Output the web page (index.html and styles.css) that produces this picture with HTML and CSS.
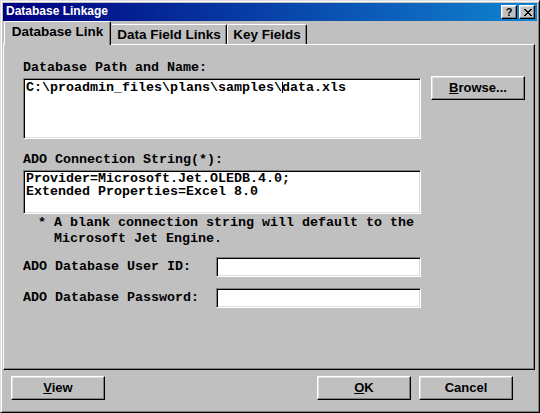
FILE: index.html
```html
<!DOCTYPE html>
<html>
<head>
<meta charset="utf-8">
<title>Database Linkage</title>
<link rel="stylesheet" href="styles.css">
</head>
<body>
<div class="window">
  <div class="titlebar">
    <span class="title">Database Linkage</span>
    <div class="tbtns">
      <span class="tbtn help">?</span>
      <span class="tbtn close"><svg width="8" height="7" viewBox="0 0 8 7" shape-rendering="crispEdges"><path d="M0 0h2v1H0z M6 0h2v1H6z M1 1h2v1H1z M5 1h2v1H5z M2 2h4v1H2z M3 3h2v1H3z M2 4h4v1H2z M1 5h2v1H1z M5 5h2v1H5z M0 6h2v1H0z M6 6h2v1H6z" fill="#000"/></svg></span>
    </div>
  </div>
  <div class="tabs">
    <div class="tab active t1">Database Link</div>
    <div class="tab t2">Data Field Links</div>
    <div class="tab t3">Key Fields</div>
  </div>
  <div class="panel">
    <div class="label first">Database Path and Name:</div>
    <div class="pathrow">
      <div class="field area1"><div class="line">C:\proadmin_files\plans\samples\<span class="caret"></span>data.xls</div></div>
      <div class="btn browse"><u>B</u>rowse...</div>
    </div>
    <div class="label second">ADO Connection String(*):</div>
    <textarea class="field area2" readonly>Provider=Microsoft.Jet.OLEDB.4.0;
Extended Properties=Excel 8.0</textarea>
    <div class="note">
      <div class="nline">* A blank connection string will default to the</div>
      <div class="nline cont">Microsoft Jet Engine.</div>
    </div>
    <div class="row r1"><span class="rlabel">ADO Database User ID:</span><input class="field input" type="text"></div>
    <div class="row r2"><span class="rlabel">ADO Database Password:</span><input class="field input" type="password"></div>
  </div>
  <div class="footer">
    <div class="btn"><u>V</u>iew</div>
    <div class="spacer"></div>
    <div class="btn"><u>O</u>K</div>
    <div class="btn">Cancel</div>
  </div>
</div>
</body>
</html>
```
FILE: styles.css
```css
html, body {
  margin: 0;
  padding: 0;
  background: #c0c0c0;
}
.window {
  width: 540px;
  height: 413px;
  box-sizing: border-box;
  border: 1px solid;
  border-color: #dfdfdf #000 #000 #dfdfdf;
  box-shadow: inset 1px 1px #fff, inset -1px -1px #808080;
  padding: 2px;
  background: #c0c0c0;
  display: flex;
  flex-direction: column;
}
.titlebar {
  height: 18px;
  flex: none;
  background: linear-gradient(to right, #000080, #1084d0);
  display: flex;
  align-items: flex-start;
  justify-content: space-between;
  padding-left: 3px;
}
.title {
  font: bold 12px/17px "Liberation Sans", Arial, sans-serif;
  color: #fff;
}
.tbtns {
  display: flex;
  gap: 2px;
  margin-top: 2px;
  margin-right: 2px;
}
.tbtn {
  width: 16px;
  height: 14px;
  box-sizing: border-box;
  background: #c0c0c0;
  border: 1px solid;
  border-color: #fff #000 #000 #fff;
  box-shadow: inset -1px -1px #808080, inset 1px 1px #dfdfdf;
  display: flex;
  align-items: center;
  justify-content: center;
}
.help {
  font: bold 11px/12px "Liberation Sans", Arial, sans-serif;
  color: #000;
}
.close svg { display: block; margin-left: 1px; }
.tabs {
  height: 23px;
  flex: none;
  display: flex;
  align-items: flex-end;
  padding-left: 1px;
  position: relative;
  z-index: 1;
}
.tab {
  box-sizing: border-box;
  height: 20px;
  font: bold 13.5px/20px "Liberation Sans", Arial, sans-serif;
  color: #000;
  text-align: center;
  border: 1px solid;
  border-bottom: none;
  border-color: #fff #000 transparent #fff;
  box-shadow: inset -1px 0 #808080;
  border-radius: 2px 2px 0 0;
  background: #c0c0c0;
}
.tab.active {
  height: 24px;
  margin-bottom: -1px;
  line-height: 20px;
}
.t1 { width: 107px; }
.t2 { width: 116px; border-left-color: transparent; line-height: 19px; }
.t3 { width: 80px; line-height: 19px; }
.panel {
  box-sizing: border-box;
  height: 326px;
  margin-right: 2px;
  flex: none;
  border: 1px solid;
  border-color: #fff #000 #000 #fff;
  box-shadow: inset -1px -1px #808080;
  padding: 16px 0 0 19px;
  font: bold 13.333px/14px "Liberation Mono", "Courier New", monospace;
  color: #000;
}
.label { height: 14px; white-space: pre; }
.first { margin-bottom: 1px; }
.second { margin-top: 14px; }
.pathrow {
  display: flex;
  align-items: flex-start;
}
.field {
  display: block;
  box-sizing: border-box;
  width: 398px;
  margin: 0;
  background: #fff;
  border: 1px solid;
  border-color: #808080 #fff #fff #808080;
  box-shadow: inset 1px 1px #000, inset -1px -1px #dfdfdf;
  padding: 2px 2px 0 2px;
  font: bold 13.333px/13px "Liberation Mono", "Courier New", monospace;
  color: #000;
  outline: none;
  border-radius: 0;
}
.line {
  height: 13px;
  line-height: 13px;
  white-space: pre;
}
.area1 {
  height: 61px;
  margin-top: 2px;
}
.caret {
  display: inline-block;
  width: 1px;
  height: 11px;
  background: #000;
  margin-right: -1px;
  vertical-align: -2px;
}
.area2 {
  height: 44px;
  margin-top: 3px;
  padding-top: 1px;
  resize: none;
  overflow: hidden;
  white-space: pre;
}
.btn {
  box-sizing: border-box;
  width: 94px;
  height: 24px;
  background: #c0c0c0;
  border: 1px solid;
  border-color: #fff #000 #000 #fff;
  box-shadow: inset -1px -1px #808080, inset 1px 1px #dfdfdf;
  font: bold 13px/22px "Liberation Sans", Arial, sans-serif;
  color: #000;
  text-align: center;
  flex: none;
}
.browse { margin-left: 10px; }
.note {
  margin-top: 1px;
  margin-left: 15px;
}
.nline {
  height: 16px;
  line-height: 16px;
  white-space: pre;
}
.cont { padding-left: 16px; }
.row {
  display: flex;
  align-items: center;
  height: 20px;
}
.r1 { margin-top: 10px; }
.r2 { margin-top: 11px; }
.rlabel {
  width: 193px;
  flex: none;
  white-space: pre;
}
.input {
  width: 205px;
  height: 20px;
  flex: none;
}
.footer {
  display: flex;
  margin-top: 6px;
  padding-left: 8px;
  padding-right: 24px;
  gap: 8px;
}
.spacer { flex: 1; }
```
